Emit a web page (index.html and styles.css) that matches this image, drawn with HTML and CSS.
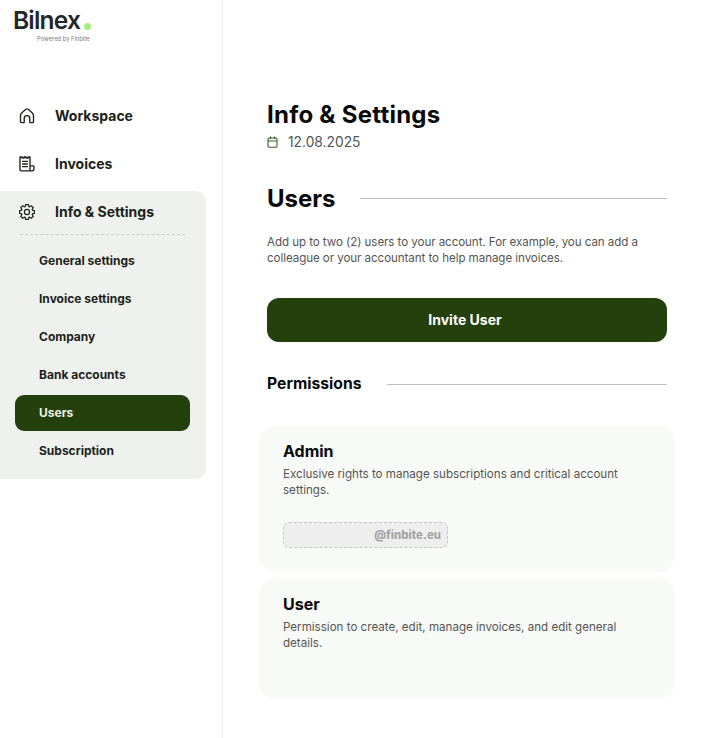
FILE: index.html
```html
<!DOCTYPE html>
<html lang="en">
<head>
<meta charset="utf-8">
<title>Info &amp; Settings</title>
<link rel="stylesheet" href="styles.css">
</head>
<body>
<div class="app">
  <aside class="sidebar">
    <div class="logo">
      <div class="logo-word">Bilnex<span class="logo-dot"></span></div>
      <div class="logo-sub">Powered by Finbite</div>
    </div>
    <nav class="nav">
      <a class="nav-item">
        <svg class="nav-icon" viewBox="0 0 16 16" fill="none" stroke="#1c1f1a" stroke-width="1.35" stroke-linejoin="round" stroke-linecap="round"><path d="M6.9 1.3a1.7 1.7 0 0 1 2.2 0l4 3.4c.9.8 1.4 1.8 1.4 3v6a.9.9 0 0 1-.9.9h-2.8V10.4a2.8 2.8 0 0 0-5.6 0v4.2H2.4a.9.9 0 0 1-.9-.9v-6c0-1.2.5-2.2 1.4-3l4-3.4Z"/></svg>
        <span>Workspace</span>
      </a>
      <a class="nav-item">
        <svg class="nav-icon" viewBox="0 0 16 16" fill="none" stroke="#1c1f1a" stroke-width="1.35" stroke-linejoin="round" stroke-linecap="round"><path d="M11 14.8H2a1 1 0 0 1-1-1V1h2.2v1h2V1h2v1h2V1H11v13.8Zm0-5h3.2a.8.8 0 0 1 .8.8v2.5a1.8 1.8 0 0 1-1.8 1.7H11"/><path d="M3.6 5.4h4.8M3.6 8h4.8M3.6 10.6h4.8"/></svg>
        <span>Invoices</span>
      </a>
      <div class="group">
        <a class="nav-item group-head">
          <svg class="nav-icon" viewBox="0 0 16 16" fill="none" stroke="#1c1f1a" stroke-width="1.2" stroke-linejoin="round"><polygon points="6.3,2.45 6.55,.54 9.45,.54 9.7,2.45 10.72,2.87 12.25,1.7 14.3,3.75 13.13,5.28 13.55,6.3 15.46,6.55 15.46,9.45 13.55,9.7 13.13,10.72 14.3,12.25 12.25,14.3 10.72,13.13 9.7,13.55 9.45,15.46 6.55,15.46 6.3,13.55 5.28,13.13 3.75,14.3 1.7,12.25 2.87,10.72 2.45,9.7 .54,9.45 .54,6.55 2.45,6.3 2.87,5.28 1.7,3.75 3.75,1.7 5.28,2.87"/><circle cx="8" cy="8" r="2.6"/></svg>
          <span>Info &amp; Settings</span>
        </a>
        <div class="group-rule"></div>
        <a class="sub-item">General settings</a>
        <a class="sub-item">Invoice settings</a>
        <a class="sub-item">Company</a>
        <a class="sub-item">Bank accounts</a>
        <a class="sub-item active">Users</a>
        <a class="sub-item">Subscription</a>
      </div>
    </nav>
  </aside>
  <main class="main">
    <h1 class="title">Info &amp; Settings</h1>
    <div class="date">
      <svg class="date-icon" viewBox="0 0 11 12" fill="none" stroke="#35602a" stroke-width="1.1" stroke-linejoin="round"><rect x="1" y="2" width="9" height="9.3" rx="1.3"/><path d="M1 5h9M3.5.5V3M7.5.5V3"/></svg>
      <span>12.08.2025</span>
    </div>
    <div class="section-head">
      <h2 class="section-title">Users</h2>
      <div class="rule"></div>
    </div>
    <p class="intro">Add up to two (2) users to your account. For example, you can add a colleague or your accountant to help manage invoices.</p>
    <button class="invite">Invite User</button>
    <div class="perm-head">
      <h3 class="perm-title">Permissions</h3>
      <div class="rule"></div>
    </div>
    <section class="card card-admin">
      <h4 class="card-title">Admin</h4>
      <p class="card-text">Exclusive rights to manage subscriptions and critical account settings.</p>
      <div class="email">@finbite.eu</div>
    </section>
    <section class="card card-user">
      <h4 class="card-title">User</h4>
      <p class="card-text">Permission to create, edit, manage invoices, and edit general details.</p>
    </section>
  </main>
</div>
</body>
</html>
```
FILE: styles.css
```css
* { box-sizing: border-box; }
html, body { margin: 0; height: 100%; background: #fff; }
body { font-family: Inter, "Liberation Sans", sans-serif; color: #1c1f1a; overflow: hidden; }
.app { display: flex; height: 738px; }
.sidebar { width: 223px; flex: none; border-right: 1px solid #eceeeb; padding-right: 16px; }
.logo { height: 92px; padding: 8px 0 0 13px; }
.logo-word { font-size: 24.5px; font-weight: 600; line-height: 24px; letter-spacing: -0.8px; color: #24262a; display: flex; align-items: flex-end; }
.logo-dot { width: 7px; height: 7px; border-radius: 50%; background: #a4f07e; margin: 0 0 2px 4px; }
.logo-sub { font-size: 5.8px; line-height: 8px; color: #77797a; margin: 3px 0 0 24px; }
.nav { display: flex; flex-direction: column; }
.nav-item { display: flex; align-items: center; height: 48px; padding-left: 19px; gap: 20px; font-size: 14px; font-weight: 700; color: #1c1f1a; }
.nav-item span { margin-top: -2px; }
.nav-icon { width: 16px; height: 16px; flex: none; }
.group { background: #eff1ef; border-radius: 0 10px 10px 0; height: 288px; margin-top: 3px; }
.group-head { height: 42px; }
.group-rule { margin: 1px 21px 8px 20px; border-top: 1px dashed #c9cbc9; }
.sub-item { display: flex; align-items: center; height: 36px; margin: 0 16px 2px 15px; padding: 0 0 2px 24px; border-radius: 9px; font-size: 12px; font-weight: 700; color: #1c1f1a; }
.sub-item.active { background: #24400d; color: #eef2ea; }
.main { flex: 1; padding: 100px 35px 0 44px; }
.title { margin: 0; font-size: 24px; line-height: 29px; font-weight: 700; color: #0a0a0a; letter-spacing: 0.25px; }
.date { display: flex; align-items: center; gap: 10px; margin-top: 3px; height: 20px; font-size: 13.8px; color: #555; }
.date-icon { width: 11px; height: 12px; flex: none; }
.section-head { display: flex; align-items: center; gap: 24px; margin-top: 31px; }
.section-title { margin: 0; font-size: 24px; line-height: 31px; font-weight: 700; color: #0a0a0a; }
.rule { flex: 1; border-top: 1px solid #bdbdbd; }
.intro { margin: 20px 0 0; font-size: 11.6px; letter-spacing: -0.07px; line-height: 16px; color: #555; }
.invite { display: block; width: 100%; height: 44px; margin-top: 32px; padding: 0 4px 2px 0; border: 0; border-radius: 12px; background: #24400d; color: #fff; font-family: inherit; font-size: 14px; font-weight: 700; }
.perm-head { display: flex; align-items: center; gap: 26px; margin-top: 32px; }
.perm-title { margin: 0; font-size: 15.7px; line-height: 20px; font-weight: 700; color: #0a0a0a; }
.card { margin: 0 -8px; padding: 16px 24px 0; background: #f8faf7; border-radius: 16px; }
.card-admin { height: 146px; margin-top: 32px; }
.card-user { height: 120px; margin-top: 7px; }
.card-title { margin: 0; font-size: 16px; line-height: 19px; font-weight: 700; color: #0a0a0a; }
.card-text { margin: 5px 0 0; font-size: 11.6px; line-height: 16px; color: #555; }
.email { width: 165px; height: 26px; margin-top: 24px; display: flex; align-items: center; justify-content: flex-end; padding-right: 6px; border: 1px dashed #c4c6c4; border-radius: 6px; background: #eeeeee; font-size: 11.4px; font-weight: 800; color: #a3a5a3; }
```
